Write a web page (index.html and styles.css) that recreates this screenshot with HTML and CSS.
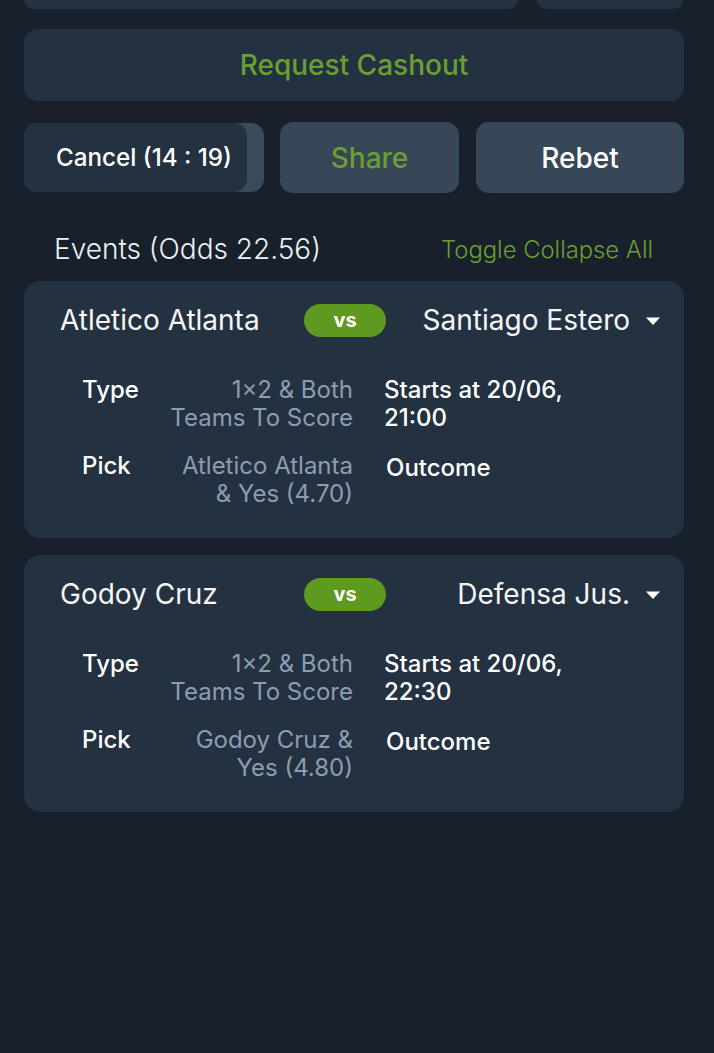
FILE: index.html
```html
<!DOCTYPE html>
<html>
<head>
<meta charset="utf-8">
<link rel="stylesheet" href="styles.css">
</head>
<body>
<div class="page">
  <div class="top-row">
    <div class="stub stub-wide"></div>
    <div class="stub stub-narrow"></div>
  </div>
  <button class="cashout">Request Cashout</button>
  <div class="actions">
    <div class="cancel">
      <div class="cancel-fill"></div>
      <span class="cancel-label">Cancel (14 : 19)</span>
    </div>
    <button class="btn btn-share">Share</button>
    <button class="btn btn-rebet">Rebet</button>
  </div>
  <div class="events-head">
    <span class="events-title">Events (Odds 22.56)</span>
    <span class="toggle">Toggle Collapse All</span>
  </div>

  <div class="event">
    <div class="event-head">
      <span class="team team-home">Atletico Atlanta</span>
      <span class="vs">vs</span>
      <span class="team team-away">Santiago Estero<svg class="caret" width="16" height="10" viewBox="0 0 16 10"><path d="M1 1.5h14L8 9z" fill="#fff"/></svg></span>
    </div>
    <div class="details">
      <span class="label">Type</span>
      <span class="value">1×2 &amp; Both Teams To Score</span>
      <span class="info">Starts at 20/06, 21:00</span>
      <span class="label">Pick</span>
      <span class="value">Atletico Atlanta &amp; Yes (4.70)</span>
      <span class="info info-outcome">Outcome</span>
    </div>
  </div>

  <div class="event">
    <div class="event-head">
      <span class="team team-home">Godoy Cruz</span>
      <span class="vs">vs</span>
      <span class="team team-away">Defensa Jus.<svg class="caret" width="16" height="10" viewBox="0 0 16 10"><path d="M1 1.5h14L8 9z" fill="#fff"/></svg></span>
    </div>
    <div class="details">
      <span class="label">Type</span>
      <span class="value">1×2 &amp; Both Teams To Score</span>
      <span class="info">Starts at 20/06, 22:30</span>
      <span class="label">Pick</span>
      <span class="value">Godoy Cruz &amp; Yes (4.80)</span>
      <span class="info info-outcome">Outcome</span>
    </div>
  </div>
</div>
</body>
</html>
```

FILE: styles.css
```css
* { box-sizing: border-box; }
html, body {
  margin: 0;
  padding: 0;
  background: #17202b;
  font-family: Inter, "Noto Sans", sans-serif;
  color: #ffffff;
  min-height: 1053px;
}
.page {
  padding: 0 30px 0 24px;
  display: flex;
  flex-direction: column;
}
.top-row {
  display: flex;
  gap: 19px;
  height: 9px;
}
.stub {
  background: #243140;
  border-radius: 0 0 12px 12px;
  height: 9px;
}
.stub-wide { width: 494px; }
.stub-narrow { width: 146px; margin-right: 1px; }

button {
  font-family: inherit;
  border: 0;
  cursor: pointer;
}
.cashout {
  margin-top: 20px;
  height: 72px;
  border-radius: 14px;
  background: #243140;
  color: #6b9e32;
  font-size: 28px;
  font-weight: 500;
}
.actions {
  margin-top: 21px;
  display: grid;
  grid-template-columns: 240px 178px 1fr;
  gap: 16px 17px;
  height: 71px;
}
.actions .btn-share { margin-left: -1px; }
.cancel {
  position: relative;
  margin: 1px 0;
  border-radius: 13px;
  background: #3a4a5b;
  overflow: hidden;
  display: flex;
  align-items: center;
}
.cancel-fill {
  position: absolute;
  left: 0; top: 0; bottom: 0;
  width: 223px;
  background: #243140;
  border-radius: 0 13px 13px 0;
}
.cancel-label {
  position: relative;
  padding-left: 32px;
  font-size: 24.2px;
  font-weight: 500;
}
.btn {
  border-radius: 13px;
  background: #374757;
  font-size: 28px;
  font-weight: 500;
}
.btn-share { color: #6b9e32; }
.btn-rebet { color: #ffffff; }

.events-head {
  margin-top: 38px;
  display: flex;
  justify-content: space-between;
  align-items: center;
  padding: 0 31px 0 30px;
  height: 36px;
}
.events-title {
  font-size: 28px;
  font-weight: 300;
  color: #eef1f4;
}
.toggle {
  font-size: 23.8px;
  font-weight: 300;
  color: #6b9e32;
}

.event {
  background: #243140;
  border-radius: 16px;
  padding: 20px 23px 30px 36px;
  margin-top: 14px;
}
.event + .event { margin-top: 17px; }
.event-head {
  display: flex;
  align-items: center;
  height: 38px;
}
.team {
  font-size: 28px;
  font-weight: 400;
  color: #f4f6f8;
}
.team-home { width: 244px; }
.team-away {
  flex: 1;
  display: flex;
  justify-content: flex-end;
  align-items: center;
  gap: 15px;
}
.caret { flex: none; margin-top: 1px; }
.vs {
  width: 82px;
  height: 33px;
  border-radius: 17px;
  background: #5f9a20;
  color: #fff;
  font-weight: 700;
  font-size: 20px;
  display: flex;
  align-items: center;
  justify-content: center;
}
.details {
  margin-top: 37px;
  padding-left: 22px;
  display: grid;
  grid-template-columns: 54px 186px 200px;
  column-gap: 31px;
  row-gap: 20px;
  font-size: 24px;
  line-height: 28px;
}
.label { font-weight: 500; color: #ffffff; }
.value { color: #8d9db0; text-align: right; }
.info { font-weight: 500; color: #ffffff; }
.info-outcome { margin-top: 2px; margin-left: 2px; }
```
